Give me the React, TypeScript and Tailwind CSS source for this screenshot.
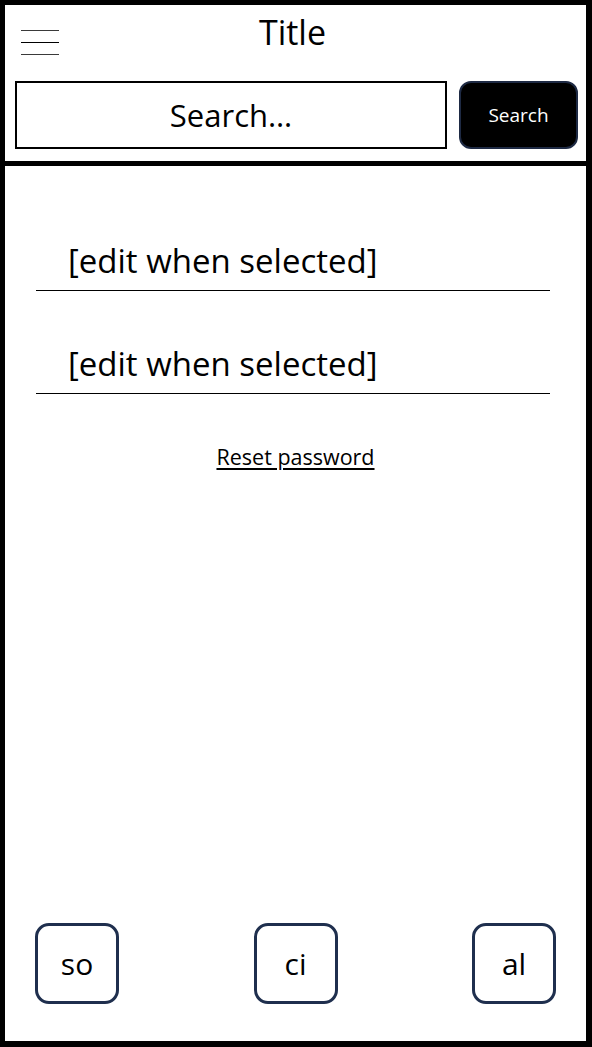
import React from 'react';

const font = { fontFamily: '"Open Sans", "Noto Sans", sans-serif' };

function Hamburger() {
  return (
    <div className="flex flex-col gap-[11px] pt-[25px] pl-[16px]">
      <div className="h-px w-[38px] bg-[#3a3a3a]" />
      <div className="h-px w-[38px] bg-black" />
      <div className="h-px w-[38px] bg-[#3a3a3a]" />
    </div>
  );
}

function Field({ className }: { className?: string }) {
  return (
    <div className={`ml-[31px] mr-[36px] border-b border-black pl-[32px] pb-[9px] ${className ?? ''}`}>
      <span className="block text-[33px] leading-[40px] text-black">[edit when selected]</span>
    </div>
  );
}

function NavButton({ label }: { label: string }) {
  return (
    <button className="flex h-[81px] w-[84px] items-center justify-center rounded-[14px] border-[3px] border-[#1f2f4e] bg-white text-[30px] text-black">
      {label}
    </button>
  );
}

export default function App() {
  return (
    <div
      className="flex h-[1047px] w-[592px] flex-col border-b-[6px] border-l-[5px] border-r-[6px] border-t-[5px] border-black bg-white"
      style={font}
    >
      {/* Header */}
      <header className="flex h-[161px] flex-col border-b-[5px] border-black">
        <div className="grid h-[76px] grid-cols-[1fr_auto_1fr]">
          <Hamburger />
          <h1 className="pt-[7px] pr-[6px] text-[34px] leading-[40px] text-black">Title</h1>
          <div />
        </div>
        <div className="flex gap-[12px] pl-[10px]">
          <input
            placeholder="Search…"
            className="h-[68px] w-[432px] border-2 border-black bg-white text-center text-[31px] text-black outline-none placeholder:text-black"
            style={font}
          />
          <button className="h-[68px] w-[119px] rounded-[12px] border-2 border-[#1e2a44] bg-black text-[19px] text-white">
            Search
          </button>
        </div>
      </header>

      {/* Main */}
      <main className="flex flex-1 flex-col">
        <Field className="mt-[75px]" />
        <Field className="mt-[53px]" />
        <div className="mt-[50px] text-center">
          <a href="#" className="text-[21.5px] leading-[26px] text-black underline underline-offset-[3px]">
            Reset password
          </a>
        </div>

        <div className="mt-auto flex justify-between px-[30px] pb-[37px]">
          <NavButton label="so" />
          <NavButton label="ci" />
          <NavButton label="al" />
        </div>
      </main>
    </div>
  );
}
